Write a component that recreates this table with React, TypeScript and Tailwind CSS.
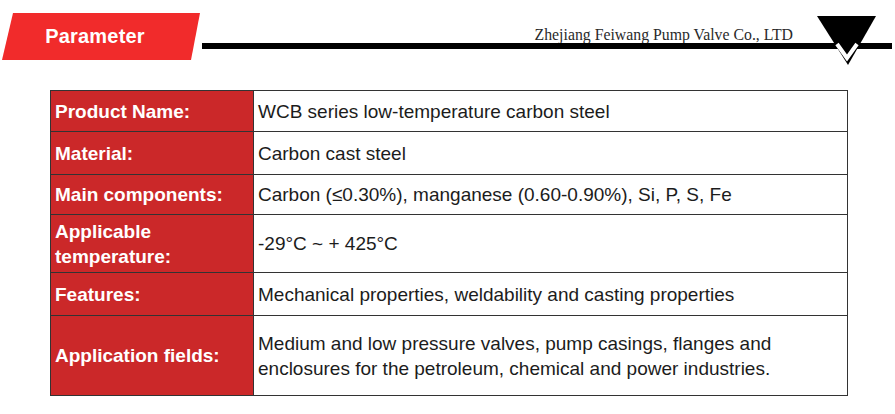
import React from 'react';

const rows: { label: string[]; value: string[]; h: string }[] = [
  { label: ['Product Name:'], value: ['WCB series low-temperature carbon steel'], h: 'h-[40px]' },
  { label: ['Material:'], value: ['Carbon cast steel'], h: 'h-[43px]' },
  { label: ['Main components:'], value: ['Carbon (≤0.30%), manganese (0.60-0.90%), Si, P, S, Fe'], h: 'h-[40px]' },
  { label: ['Applicable', 'temperature:'], value: ['-29°C ~ + 425°C'], h: 'h-[58px]' },
  { label: ['Features:'], value: ['Mechanical properties, weldability and casting properties'], h: 'h-[43px]' },
  {
    label: ['Application fields:'],
    value: [
      'Medium and low pressure valves, pump casings, flanges and',
      'enclosures for the petroleum, chemical and power industries.',
    ],
    h: 'h-[80px]',
  },
];

const App: React.FC = () => {
  return (
    <div className="w-[895px] h-[414px] bg-white overflow-hidden font-['Liberation_Sans',Arial,sans-serif]">
      {/* Header */}
      <div className="relative h-[90px]">
        <div className="flex items-start pt-[13px]">
          <div className="ml-[2px] w-[198px] h-[47px] bg-[#f12b2b] [clip-path:polygon(11px_0,100%_0,189px_100%,0_100%)] flex items-center justify-center">
            <span className="text-white font-bold text-[20px] tracking-[0.2px] pr-[12px] pb-[2px]">Parameter</span>
          </div>
          <div className="flex-1 flex flex-col">
            <div className="h-[30px] flex items-end justify-end pr-[102px]">
              <span className="font-['Liberation_Serif','Times_New_Roman',serif] text-[15.8px] text-[#2a2a2a] leading-none">
                Zhejiang Feiwang Pump Valve Co., LTD
              </span>
            </div>
            <div className="ml-[2px] mr-[3px] h-[6px] bg-black" />
          </div>
        </div>
        {/* logo mark */}
        <svg className="absolute left-[816px] top-[15px]" width="62" height="54" viewBox="0 0 62 54">
          <polygon points="1,1 60,1 32,50" fill="#000" />
          <polyline points="21,29 31,43 41,29" fill="none" stroke="#fff" strokeWidth="4" />
        </svg>
      </div>

      {/* Table */}
      <div className="ml-[50px] w-[798px] border border-[#333]">
        {rows.map((r, i) => (
          <div key={i} className={`flex ${r.h} ${i > 0 ? 'border-t border-[#333]' : ''}`}>
            <div className="w-[203px] shrink-0 bg-[#cb2829] border-r border-[#333] flex flex-col justify-center pl-[4px] text-white font-bold text-[19px] leading-[25px]">
              {r.label.map((l) => (
                <div key={l}>{l}</div>
              ))}
            </div>
            <div className="flex-1 flex flex-col justify-center pl-[4px] text-[#1c1c1c] text-[19px] leading-[25px]">
              {r.value.map((v) => (
                <div key={v}>{v}</div>
              ))}
            </div>
          </div>
        ))}
      </div>
    </div>
  );
};

export default App;
